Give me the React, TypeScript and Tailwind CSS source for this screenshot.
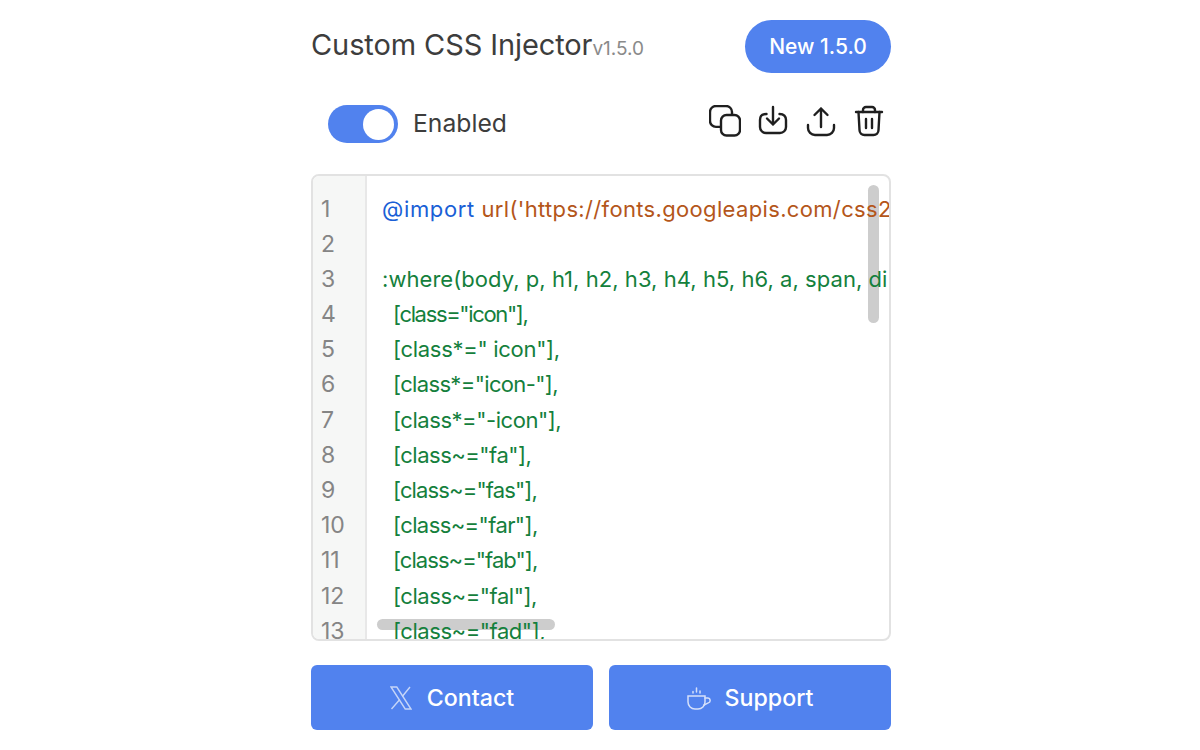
const lines: { text: string; cls: string }[] = [
  { text: '[class="icon"],', cls: "tracking-[-1.35px]" },
  { text: '[class*=" icon"],', cls: "tracking-[-0.3px]" },
  { text: '[class*="icon-"],', cls: "tracking-[-0.65px]" },
  { text: '[class*="-icon"],', cls: "tracking-[-0.45px]" },
  { text: '[class~="fa"],', cls: "tracking-[-0.5px]" },
  { text: '[class~="fas"],', cls: "tracking-[-0.87px]" },
  { text: '[class~="far"],', cls: "tracking-[-0.6px]" },
  { text: '[class~="fab"],', cls: "tracking-[-0.95px]" },
  { text: '[class~="fal"],', cls: "tracking-[-0.45px]" },
  { text: '[class~="fad"],', cls: "tracking-[-0.45px]" },
];

function CopyIcon() {
  return (
    <svg width="32" height="32" viewBox="0 0 32 32" fill="none" stroke="#1f1f1f" strokeWidth="2.4">
      <path d="M11 21.900H7a6 6 0 0 1-6-6V7a6 6 0 0 1 6-6h10a6 6 0 0 1 6 6v3" />
      <rect x="12" y="10" width="19" height="20.500" rx="5.500" />
    </svg>
  );
}

function DownloadIcon() {
  return (
    <svg width="32" height="32" viewBox="0 0 32 32" fill="none" stroke="#1f1f1f" strokeWidth="2.4" strokeLinecap="round" strokeLinejoin="round">
      <path d="M16 2v17.500M10 13.500l6 6 6-6" />
      <path d="M9.500 9C5 9 3 11 3 15v7a6 6 0 0 0 6 6h14a6 6 0 0 0 6-6v-7c0-4-2-6-6.500-6" />
    </svg>
  );
}

function UploadIcon() {
  return (
    <svg width="32" height="32" viewBox="0 0 32 32" fill="none" stroke="#1f1f1f" strokeWidth="2.4" strokeLinecap="round" strokeLinejoin="round">
      <path d="M16 3.500v18.500M9.500 10 16 3.500l6.500 6.500" />
      <path d="M3 20v3a7 7 0 0 0 7 7h12a7 7 0 0 0 7-7v-3" />
    </svg>
  );
}

function TrashIcon() {
  return (
    <svg width="32" height="32" viewBox="0 0 32 32" fill="none" stroke="#1f1f1f" strokeWidth="2.4" strokeLinecap="round" strokeLinejoin="round">
      <path d="M3 7h26" />
      <path d="M10 7V5a3 3 0 0 1 3-3h6a3 3 0 0 1 3 3v2" />
      <path d="M5.500 7l1 18a5 5 0 0 0 5 5h9a5 5 0 0 0 5-5l1-18" />
      <path d="M13 14v9M19 14v9" />
    </svg>
  );
}

function XLogo() {
  return (
    <svg width="22" height="24" viewBox="0 0 22 24" fill="none" stroke="#c5d5f8" strokeWidth="1.400">
      <path d="M1 1h5.800L21 23h-5.800z" />
      <path d="M20 1 12.300 10.500M9.800 13.500 1.500 23" />
    </svg>
  );
}

function CupIcon() {
  return (
    <svg width="24" height="24" viewBox="0 0 24 24" fill="none" stroke="#d5e0fa" strokeWidth="1.500" strokeLinecap="round">
      <path d="M1 10h17v6a7 7 0 0 1-7 7H8a7 7 0 0 1-7-7z" />
      <path d="M18 12h2.500a2.500 2.500 0 0 1 .8 4.900L17 19" />
      <path d="M6 7V5.500M9.500 6V2M13 7V5" />
    </svg>
  );
}

export default function App() {
  return (
    <div className="w-[1200px] h-[750px] bg-white flex justify-center font-['Inter',sans-serif] overflow-hidden">
      <div className="w-[580px] ml-[2px] pt-5 flex flex-col">
        <div className="flex items-center justify-between h-[53px]">
          <div className="flex items-baseline -mt-[4px]">
            <span className="text-[29px] text-[#3d3d3d] tracking-[-0.1px]">Custom CSS Injector</span>
            <span className="text-[19px] text-[#8a8a8a]">v1.5.0</span>
          </div>
          <button className="w-[146px] h-[53px] rounded-full bg-[#5182ee] text-white text-[21px] font-medium">New 1.5.0</button>
        </div>

        <div className="flex items-center justify-between mt-[32px] h-[38px] pl-[17px] pr-[6px]">
          <div className="flex items-center gap-[15px]">
            <div className="w-[70px] h-[38px] rounded-full bg-[#5182ee] flex items-center justify-end pr-[4px]">
              <div className="w-[31px] h-[31px] rounded-full bg-white" />
            </div>
            <span className="text-[24.700px] text-[#3d3d3d]">Enabled</span>
          </div>
          <div className="flex items-center gap-4 mb-[6px]">
            <CopyIcon />
            <DownloadIcon />
            <UploadIcon />
            <TrashIcon />
          </div>
        </div>

        <div className="relative mt-[31px] h-[467px] border-2 border-[#e2e2e2] rounded-lg flex overflow-hidden">
          <div className="w-[54px] shrink-0 bg-[#f6f7f6] border-r-2 border-[#e8e8e8] pt-[15.5px] pl-[8px] text-[23px] leading-[35.2px] text-[#858585]">
            {Array.from({ length: 13 }).map((_, i) => (
              <div key={i} className="h-[35.2px]">{i + 1}</div>
            ))}
          </div>
          <div className="relative z-10 flex-1 min-w-0 pt-[15.5px] pl-[15px] text-[22px] leading-[35.2px] text-[#14803c] whitespace-nowrap overflow-hidden">
            <div className="h-[35.2px] tracking-[0.34px]">
              <span className="text-[#1a5fd6] tracking-[0.65px]">@import</span>{" "}
              <span className="text-[#b4561a]">url('https://fonts.googleapis.com/css2</span>
            </div>
            <div className="h-[35.2px]" />
            <div className="h-[35.2px] tracking-[0.05px]">:where(body, p, h1, h2, h3, h4, h5, h6, a, span, di</div>
            {lines.map((l) => (
              <div key={l.text} className={`h-[35.2px] pl-[11px] ${l.cls}`}>{l.text}</div>
            ))}
          </div>
          <div className="absolute right-[10px] top-[9px] w-[11px] h-[138px] rounded-full bg-[#cdcdcd]" />
          <div className="absolute left-[64px] bottom-[9px] w-[178px] h-[11px] rounded-full bg-[#cdcdcd]" />
        </div>

        <div className="grid grid-cols-2 gap-4 mt-[24px]">
          <button className="h-[65px] pt-px rounded-md bg-[#5182ee] text-white text-[23.200px] font-medium flex items-center justify-center gap-[15px]">
            <XLogo />
            Contact
          </button>
          <button className="h-[65px] pt-px rounded-md bg-[#5182ee] text-white text-[23.200px] font-medium flex items-center justify-center gap-[14px]">
            <CupIcon />
            Support
          </button>
        </div>
      </div>
    </div>
  );
}
